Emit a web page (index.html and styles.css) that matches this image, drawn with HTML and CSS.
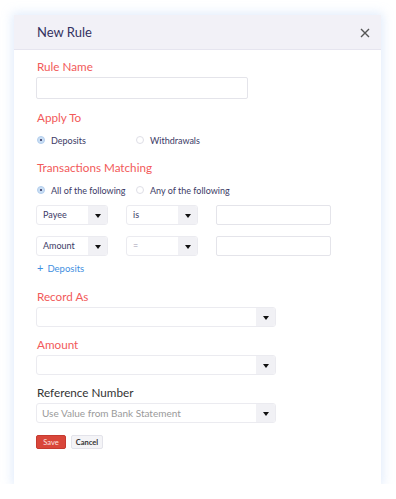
FILE: index.html
```html
<!DOCTYPE html>
<html>
<head>
<meta charset="utf-8">
<link rel="stylesheet" href="styles.css">
</head>
<body>
<div class="page">
  <div class="card">
    <div class="header">
      <div class="title">New Rule</div>
      <svg class="close" width="10" height="10" viewBox="0 0 10 10"><path d="M1 1L9 9M9 1L1 9" stroke="#555" stroke-width="1.4" fill="none"/></svg>
    </div>
    <div class="body">
      <div class="label red">Rule Name</div>
      <div class="input name-input"></div>

      <div class="label red mt10">Apply To</div>
      <div class="radio-row">
        <div class="radio-item w100"><span class="radio on"></span>Deposits</div>
        <div class="radio-item"><span class="radio"></span>Withdrawals</div>
      </div>

      <div class="label red mt12">Transactions Matching</div>
      <div class="radio-row">
        <div class="radio-item w100"><span class="radio on"></span>All of the following</div>
        <div class="radio-item"><span class="radio"></span>Any of the following</div>
      </div>

      <div class="cond-row first">
        <div class="select small"><span class="val">Payee</span><span class="dd"><i class="caret"></i></span></div>
        <div class="select small"><span class="val">is</span><span class="dd"><i class="caret"></i></span></div>
        <div class="input cond-input"></div>
      </div>
      <div class="cond-row second">
        <div class="select small"><span class="val">Amount</span><span class="dd"><i class="caret"></i></span></div>
        <div class="select small"><span class="val muted">=</span><span class="dd"><i class="caret"></i></span></div>
        <div class="input cond-input"></div>
      </div>
      <div class="add-link"><span class="plus">+</span>Deposits</div>

      <div class="label red mt13">Record As</div>
      <div class="select wide"><span class="val"></span><span class="dd"><i class="caret"></i></span></div>

      <div class="label red mt9">Amount</div>
      <div class="select wide"><span class="val"></span><span class="dd"><i class="caret"></i></span></div>

      <div class="label dark mt9">Reference Number</div>
      <div class="select wide"><span class="val placeholder">Use Value from Bank Statement</span><span class="dd"><i class="caret"></i></span></div>

      <div class="buttons">
        <button class="btn save">Save</button>
        <button class="btn cancel">Cancel</button>
      </div>
    </div>
  </div>
</div>
</body>
</html>
```

FILE: styles.css
```css
html, body {
  margin: 0;
  padding: 0;
  background: #ffffff;
}
body {
  font-family: Lato, "Open Sans", Arial, sans-serif;
}
.page {
  padding: 15px 0 0 14px;
}
.card {
  width: 367px;
  height: 469px;
  background: #ffffff;
  box-shadow: 0 0 10px 2px rgba(170, 200, 245, 0.35);
}
.header {
  height: 34px;
  background: #f2f1f7;
  border-bottom: 1px solid #e6e5ef;
  display: flex;
  align-items: center;
  justify-content: space-between;
  padding: 0 11px 0 23px;
}
.title {
  font-size: 13px;
  color: #34325f;
}
.close {
  display: block;
  margin-top: 1px;
}
.body {
  padding: 8px 0 0 22px;
}
.label {
  font-size: 11.7px;
  line-height: 16px;
  height: 16px;
  padding-left: 1px;
}
.red { color: #f25a5a; }
.dark { color: #333333; }
.mt9 { margin-top: 9px; }
.mt10 { margin-top: 10px; }
.mt12 { margin-top: 12px; }
.mt13 { margin-top: 13px; }
.input {
  box-sizing: border-box;
  border: 1px solid #e4e4ea;
  background: #fff;
  border-radius: 2px;
}
.name-input {
  width: 212px;
  height: 22px;
  margin-top: 3px;
}
.radio-row {
  display: flex;
  align-items: center;
  height: 14px;
  margin-top: 8px;
  padding-left: 1px;
  font-size: 9px;
  color: #3b3a66;
}
.radio-item {
  display: flex;
  align-items: center;
}
.w100 { width: 99px; }
.radio {
  box-sizing: border-box;
  width: 8px;
  height: 8px;
  border-radius: 50%;
  border: 1px solid #dedee6;
  margin-right: 6px;
  position: relative;
}
.radio.on {
  background: #c9def4;
  border-color: #b4cfee;
}
.radio.on::after {
  content: "";
  position: absolute;
  left: 2px;
  top: 2px;
  width: 2px;
  height: 2px;
  border-radius: 50%;
  background: #2b2a55;
}
.cond-row {
  display: flex;
  gap: 18px;
  height: 20px;
}
.cond-row.first { margin-top: 8px; }
.cond-row.second { margin-top: 11px; }
.select {
  box-sizing: border-box;
  display: flex;
  height: 20px;
  border: 1px solid #ebebf0;
  border-radius: 3px;
  background: #fff;
  overflow: hidden;
}
.select.small { width: 72px; }
.select.wide { width: 240px; margin-top: 3px; }
.select .val {
  flex: 1;
  font-size: 9px;
  line-height: 18px;
  color: #3b3a66;
  padding-left: 6px;
  white-space: nowrap;
}
.select .val.muted { color: #9a99b0; }
.select .val.placeholder {
  color: #9a9a9a;
  font-size: 10px;
  padding-left: 5px;
}
.select .dd {
  width: 19px;
  background: #f1f1f5;
  display: flex;
  align-items: center;
  justify-content: center;
}
.caret {
  width: 0;
  height: 0;
  border-left: 3.5px solid transparent;
  border-right: 3.5px solid transparent;
  border-top: 4px solid #111;
  margin-top: 2px;
}
.cond-input {
  width: 115px;
  height: 20px;
}
.add-link {
  margin-top: 5px;
  height: 14px;
  line-height: 14px;
  font-size: 9.5px;
  color: #3f8fdf;
  padding-left: 1px;
}
.plus {
  margin-right: 4px;
  font-size: 11px;
}
.buttons {
  display: flex;
  gap: 5px;
  margin-top: 12px;
}
.btn {
  font-family: Lato, Arial, sans-serif;
  font-size: 7.5px;
  height: 14px;
  padding: 0;
  border-radius: 2px;
  cursor: pointer;
}
.save {
  width: 30px;
  background: #d9463a;
  border: 1px solid #c63a30;
  color: #fbe3e0;
}
.cancel {
  width: 32px;
  background: #f4f4f7;
  border: 1px solid #e3e3ea;
  color: #333;
  font-weight: bold;
}
```
